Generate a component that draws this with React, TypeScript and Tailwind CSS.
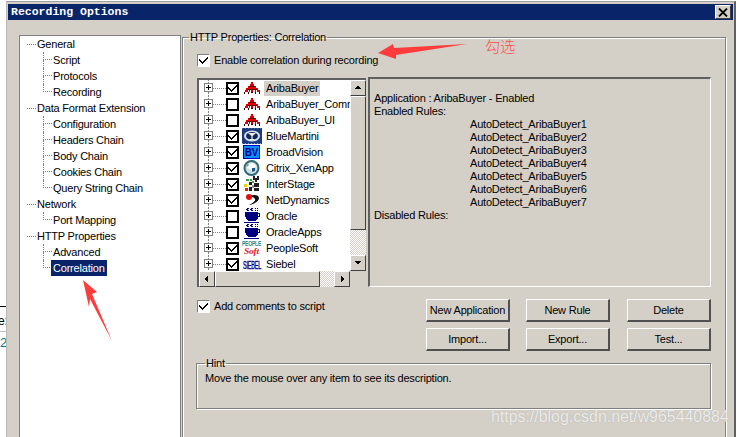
import React from 'react'

const sections = [
  { label: 'General', children: ['Script', 'Protocols', 'Recording'] },
  { label: 'Data Format Extension', children: ['Configuration', 'Headers Chain', 'Body Chain', 'Cookies Chain', 'Query String Chain'] },
  { label: 'Network', children: ['Port Mapping'] },
  { label: 'HTTP Properties', children: ['Advanced', 'Correlation'] },
]

const rules = [1, 2, 3, 4, 5, 6, 7]

function Ariba() {
  return (
    <svg width="16" height="14" viewBox="0 0 16 14" shapeRendering="crispEdges">
      <path d="M7 1h2v2h1v2h2v2h2v2h2v2h-3V9h-1v2h-1V9H9v2H7V9H6v2H5V9H4v2H1V9h1V7h2V5h2V3h1z" fill="#e00000" />
      <path d="M5 5h6v1H5zM3 8h10v1H3z" fill="#700000" />
      <path d="M0 11h1v2H0zM4 11h1v2H4zM7 11h2v1H7zM11 11h1v2h-1zM15 11h1v2h-1z" fill="#300000" />
    </svg>
  )
}

function BlueMartini() {
  return (
    <svg width="20" height="16" viewBox="0 0 20 16">
      <rect width="20" height="16" fill="#1c3a7c" />
      <ellipse cx="10" cy="8" rx="8" ry="5.5" fill="#d8e4f0" />
      <ellipse cx="10" cy="8" rx="6" ry="4" fill="#10265e" />
      <path d="M6 5h8l-3.4 3v3h2v1H7.400v-1h2V8z" fill="#f0f0e0" />
      <path d="M0 0h20M0 15.500h20" stroke="#7f9fd0" strokeDasharray="1 2" />
    </svg>
  )
}

function BroadVision() {
  return (
    <svg width="17" height="14" viewBox="0 0 17 14">
      <rect x="0.5" y="0.5" width="16" height="13" fill="#0a8cff" stroke="#0000c0" />
      <text x="2" y="11" textLength="13" lengthAdjust="spacingAndGlyphs" fontSize="11" fontWeight="700" fontFamily="'Liberation Sans', sans-serif" fill="#000080">BV</text>
    </svg>
  )
}

function Citrix() {
  return (
    <svg width="17" height="16" viewBox="0 0 17 16">
      <circle cx="8.500" cy="8" r="7" fill="#cfe0e0" stroke="#306a78" strokeWidth="2" />
      <path d="M5 4l5-1 3 3-2 2 1 3-3 1-2-3-3-1z" fill="#fff" />
      <path d="M9 8l3 0 0 3-3 1z" fill="#1a5a8a" />
      <path d="M3 5l2-2 1 2-2 2z" fill="#80a0a0" />
    </svg>
  )
}

function InterStage() {
  return (
    <svg width="17" height="16" viewBox="0 0 17 16" shapeRendering="crispEdges">
      <path d="M10 0h2v2h2V0h2v4h-2v2h-2V4h-2zM6 6h3v3H6zM11 7h5v4h-5zM6 11h3v4H6zM11 12h5v3h-5z" fill="#202020" />
      <path d="M3 3h3v2H3zM7 3h2v2H7zM9 5h2v2H9z" fill="#40a040" />
      <path d="M1 8h3v3H1z" fill="#f0d000" />
      <path d="M2 12h3v3H2z" fill="#e02020" />
      <path d="M9 9h2v3H9z" fill="#909090" />
    </svg>
  )
}

function NetDynamics() {
  return (
    <svg width="18" height="14" viewBox="0 0 18 14">
      <path d="M7 3c4-2 9-1 9 2s-4 6-10 7c4-2 7-4 6-6s-3-2-5-3z" fill="#101010" />
      <circle cx="6" cy="4" r="3" fill="#e01010" />
    </svg>
  )
}

function OracleCup() {
  return (
    <svg width="16" height="16" viewBox="0 0 16 16" shapeRendering="crispEdges">
      <path d="M3 0h2v1H3zM2 1h2v1H2zM3 2h2v1H3zM7 0h2v1H7zM6 1h2v1H6zM7 2h2v1H7zM11 0h1v1h-1zM13 0h1v1h-1zM11 2h1v1h-1zM13 2h1v1h-1z" fill="#000080" />
      <path d="M1 4h13v1h2v4h-2v2h-1v1h-1v1H4v-1H3v-1H2V9H1z" fill="#000080" />
      <path d="M0 14h15v1H0z" fill="#000080" />
      <path d="M14 6h1v2h-1z" fill="#fff" />
    </svg>
  )
}

function PeopleSoft() {
  return (
    <svg width="20" height="16" viewBox="0 0 20 16">
      <text x="0" y="4" transform="scale(1,1.5)" textLength="19" lengthAdjust="spacingAndGlyphs" fontSize="4.500" fontWeight="700" fontFamily="'Liberation Sans', sans-serif" fill="#208a8a">PEOPLE</text>
      <text x="2" y="14" textLength="15" lengthAdjust="spacingAndGlyphs" fontSize="9" fontWeight="700" fontStyle="italic" fontFamily="'Liberation Serif', serif" fill="#e02020">Soft</text>
    </svg>
  )
}

function SiebelMark() {
  return (
    <svg width="20" height="14" viewBox="0 0 20 14">
      <text x="1" y="6" transform="scale(1,2)" textLength="18" lengthAdjust="spacingAndGlyphs" fontSize="5" fontFamily="'Liberation Sans', sans-serif" fill="#000080" stroke="#000080" strokeWidth="0.2">SIEBEL</text>
    </svg>
  )
}

const apps = [
  { name: 'AribaBuyer', checked: true, icon: <Ariba />, selected: true },
  { name: 'AribaBuyer_Common', checked: false, icon: <Ariba /> },
  { name: 'AribaBuyer_UI', checked: false, icon: <Ariba /> },
  { name: 'BlueMartini', checked: true, icon: <BlueMartini /> },
  { name: 'BroadVision', checked: true, icon: <BroadVision /> },
  { name: 'Citrix_XenApp', checked: true, icon: <Citrix /> },
  { name: 'InterStage', checked: true, icon: <InterStage /> },
  { name: 'NetDynamics', checked: true, icon: <NetDynamics /> },
  { name: 'Oracle', checked: false, icon: <OracleCup /> },
  { name: 'OracleApps', checked: false, icon: <OracleCup /> },
  { name: 'PeopleSoft', checked: true, icon: <PeopleSoft /> },
  { name: 'Siebel', checked: true, icon: <SiebelMark /> },
]

function Tick() {
  return (
    <svg width="9" height="9" viewBox="0 0 9 9" shapeRendering="crispEdges">
      <path d="M8 1h1v2H8v1H7v1H6v1H5v1H4v1H3V7H2V6H1V5H0V3h1v1h1v1h1v1h1V5h1V4h1V3h1V2h1z" fill="#000" />
    </svg>
  )
}

function Button({ label }: { label: string }) {
  return (
    <button className="h-[23px] w-[84px] bg-[#d4d0c8] border-t border-l border-white border-r-2 border-b-2 border-r-[#505050] border-b-[#505050] whitespace-nowrap text-[11px] tracking-[-0.2px] leading-none text-black">
      {label}
    </button>
  )
}

function SunkenCheck({ label }: { label: string }) {
  return (
    <div className="flex items-center gap-[5px] h-[14px]">
      <span className="w-[12px] h-[12px] -mt-[1px] bg-white flex items-center justify-center border-t border-l border-[#808080] shadow-[1px_1px_0_#fff]">
        <Tick />
      </span>
      <span>{label}</span>
    </div>
  )
}

function ArrowBtn({ d, size = 'w-[16px] h-[16px]' }: { d: string; size?: string }) {
  return (
    <div className={`${size} shrink-0 bg-[#d4d0c8] border-t border-l border-white border-r border-b border-r-[#404040] border-b-[#404040] flex items-center justify-center`}>
      <svg width="8" height="8" viewBox="0 0 8 8" shapeRendering="crispEdges">
        <path d={d} fill="#000" />
      </svg>
    </div>
  )
}

function Elbow({ last }: { last: boolean }) {
  return (
    <span className="w-[9px] h-4 flex flex-col shrink-0">
      <span className="h-2 border-l border-b border-dotted border-[#808080]" />
      <span className={last ? 'h-2' : 'h-2 border-l border-dotted border-[#808080]'} />
    </span>
  )
}

export default function App() {
  return (
    <div className="relative w-[739px] h-[437px] overflow-hidden bg-white flex text-[11px] tracking-[-0.2px] leading-[14px] text-black font-['Liberation_Sans',Arial,sans-serif]">
      {/* bits of the window behind the dialog */}
      <div className="w-[6px] shrink-0 overflow-hidden">
        <div className="mt-[306px] h-px bg-black" />
        <div className="mt-[7px] -ml-[2px] text-[12px]">e:</div>
        <div className="mt-[3px] h-px bg-[#c0c0c0]" />
        <div className="mt-[4px] text-[13px] text-[#008080]">2</div>
      </div>

      <div className="w-[730px] shrink-0 mt-[1px] bg-[#d4d0c8] border-l border-t border-l-[#b8b8b8] border-t-[#a0a0a0] border-r-2 border-r-[#606060] pt-[2px]">
        <div className="mx-[1px] h-[16px] bg-[#0a246a] flex items-center justify-between pl-[3px] pr-[2px]">
          <span className="text-white font-bold text-[11.5px] tracking-normal font-['Liberation_Mono',monospace]">Recording Options</span>
          <div className="w-[16px] h-[14px] bg-[#d4d0c8] border-t border-l border-white border-r border-b border-r-[#404040] border-b-[#404040] flex items-center justify-center">
            <svg width="10" height="9" viewBox="0 0 10 9">
              <path d="M1 0.500l8 8M9 0.500l-8 8" stroke="#000" strokeWidth="1.800" />
            </svg>
          </div>
        </div>

        <div className="flex pl-[12px] mt-[10px]">
          <div className="w-[162px] h-[420px] mt-[5px] bg-white border border-[#808080] pl-[7px] shrink-0">
            {sections.map((s) => (
              <div key={s.label}>
                <div className="h-4 flex items-center">
                  <span className="w-[9px] border-t border-dotted border-[#808080] mr-[1px]" />
                  <span>{s.label}</span>
                </div>
                {s.children.map((c, i) => (
                  <div key={c} className="h-4 flex items-center pl-[16px]">
                    <Elbow last={i === s.children.length - 1} />
                    {c === 'Correlation' ? (
                      <span className="bg-[#0a246a] text-white h-4 leading-4 px-[2px] -ml-[1px]">{c}</span>
                    ) : (
                      <span className="pl-[1px]">{c}</span>
                    )}
                  </div>
                ))}
              </div>
            ))}
          </div>

          <fieldset className="ml-[1px] w-[544px] h-[430px] border border-[#808080] shadow-[inset_1px_1px_0_#fff,1px_1px_0_#fff] pl-[14px]">
            <legend className="-ml-[8px] px-[1px]">HTTP Properties: Correlation</legend>

            <div className="w-[514px]">
              <div className="mt-[9px]">
                <SunkenCheck label="Enable correlation during recording" />
              </div>

              <div className="flex h-[210px] mt-[10px]">
                <div className="w-[169px] mt-[1px] h-[209px] border-t-2 border-l-2 border-[#606060] bg-white flex flex-col shrink-0">
                  <div className="flex flex-1 min-h-0">
                    <div className="flex-1 min-w-0 overflow-hidden">
                      {apps.map((a) => (
                        <div key={a.name} className="h-4 flex items-center whitespace-nowrap">
                          <span className="w-[9px] h-4 ml-[5px] flex flex-col shrink-0">
                            <span className="h-[3px] ml-[4px] border-l border-dotted border-[#808080]" />
                            <span className="w-[9px] h-[9px] border border-[#808080] bg-white flex items-center justify-center">
                              <svg width="7" height="7" viewBox="0 0 7 7" shapeRendering="crispEdges">
                                <path d="M1 3h5v1H1zM3 1h1v5H3z" fill="#000" />
                              </svg>
                            </span>
                            <span className="h-[4px] ml-[4px] border-l border-dotted border-[#808080]" />
                          </span>
                          <span className="w-[13px] border-t border-dotted border-[#808080] shrink-0" />
                          <span className="w-[13px] h-[13px] border-2 border-black flex items-center justify-center shrink-0">
                            {a.checked && <Tick />}
                          </span>
                          <span className="w-[25px] h-4 flex items-center justify-center shrink-0 overflow-visible">
                            {a.icon}
                          </span>
                          <span className={a.selected ? 'bg-[#d4d0c8] px-[2px] h-[15px] leading-[15px]' : 'px-[2px]'}>{a.name}</span>
                        </div>
                      ))}
                    </div>
                    <div className="w-[16px] flex flex-col shrink-0 bg-[repeating-conic-gradient(#d4d0c8_0_25%,#ffffff_0_50%)] bg-[length:2px_2px]">
                      <ArrowBtn d="M3 2h2v1h1v1h1v1H1V4h1V3h1z" />
                      <div className="h-[134px] bg-[#d4d0c8] border-t border-l border-white border-r border-b border-r-[#404040] border-b-[#404040]" />
                      <div className="flex-1" />
                      <ArrowBtn d="M1 2h6v1H6v1H5v1H3V4H2V3H1z" />
                    </div>
                  </div>
                  <div className="h-[16px] flex shrink-0 bg-[repeating-conic-gradient(#d4d0c8_0_25%,#ffffff_0_50%)] bg-[length:2px_2px]">
                    <ArrowBtn d="M2 4V3h1V2h1V1h1v6H4V6H3V5H2z" />
                    <div className="w-[105px] bg-[#d4d0c8] border-t border-l border-white border-r border-b border-r-[#404040] border-b-[#404040]" />
                    <div className="flex-1" />
                    <ArrowBtn d="M3 1h1v1h1v1h1v2H5v1H4v1H3z" />
                    <div className="w-[16px] bg-[#d4d0c8]" />
                  </div>
                </div>

                <div className="ml-[2px] w-[343px] h-[210px] border-t-2 border-l-2 border-t-[#606060] border-l-[#606060] border-r border-b border-r-white border-b-white pl-[4px] pt-[13px] leading-[13px]">
                  <div>Application : AribaBuyer - Enabled</div>
                  <div>Enabled Rules:</div>
                  {rules.map((n) => (
                    <div key={n} className="pl-[96px]">AutoDetect_AribaBuyer{n}</div>
                  ))}
                  <div>Disabled Rules:</div>
                </div>
              </div>

              <div className="flex justify-between mt-[12px]">
                <SunkenCheck label="Add comments to script" />
                <div className="grid grid-cols-[100px_101px_84px] gap-y-[6px]">
                  {['New Application', 'New Rule', 'Delete', 'Import...', 'Export...', 'Test...'].map((b) => (
                    <Button key={b} label={b} />
                  ))}
                </div>
              </div>

              <fieldset className="-ml-[1px] mt-[5px] w-[515px] h-[53px] border border-[#808080] shadow-[inset_1px_1px_0_#fff,1px_1px_0_#fff] px-[8px]">
                <legend className="px-[1px]">Hint</legend>
                <div className="mt-[1px]">Move the mouse over any item to see its description.</div>
              </fieldset>
            </div>
          </fieldset>
        </div>
      </div>

      <div className="flex-1 overflow-hidden" />

      {/* red annotations pasted over the screenshot */}
      <svg className="absolute left-0 top-0 pointer-events-none" width="739" height="437">
        <polygon points="378,53 393,44 394,48 467,44 396,55 396,59" fill="#ff3c3c" />
        <polygon points="83,280 97,292 92,294 112,341 90,299 89,307" fill="#ff3c3c" />
      </svg>
      <span className="absolute left-[485px] top-[36px] text-[15px] tracking-normal leading-[20px] text-[#ff4d4d] font-['Noto_Sans_CJK_SC',sans-serif] font-light">勾选</span>
      <span className="absolute left-[491px] top-[407px] text-[15.900px] tracking-normal leading-[20px] text-white/80 [text-shadow:0_0_1px_rgba(120,120,120,0.6)]">https://blog.csdn.net/w965440884</span>
    </div>
  )
}
